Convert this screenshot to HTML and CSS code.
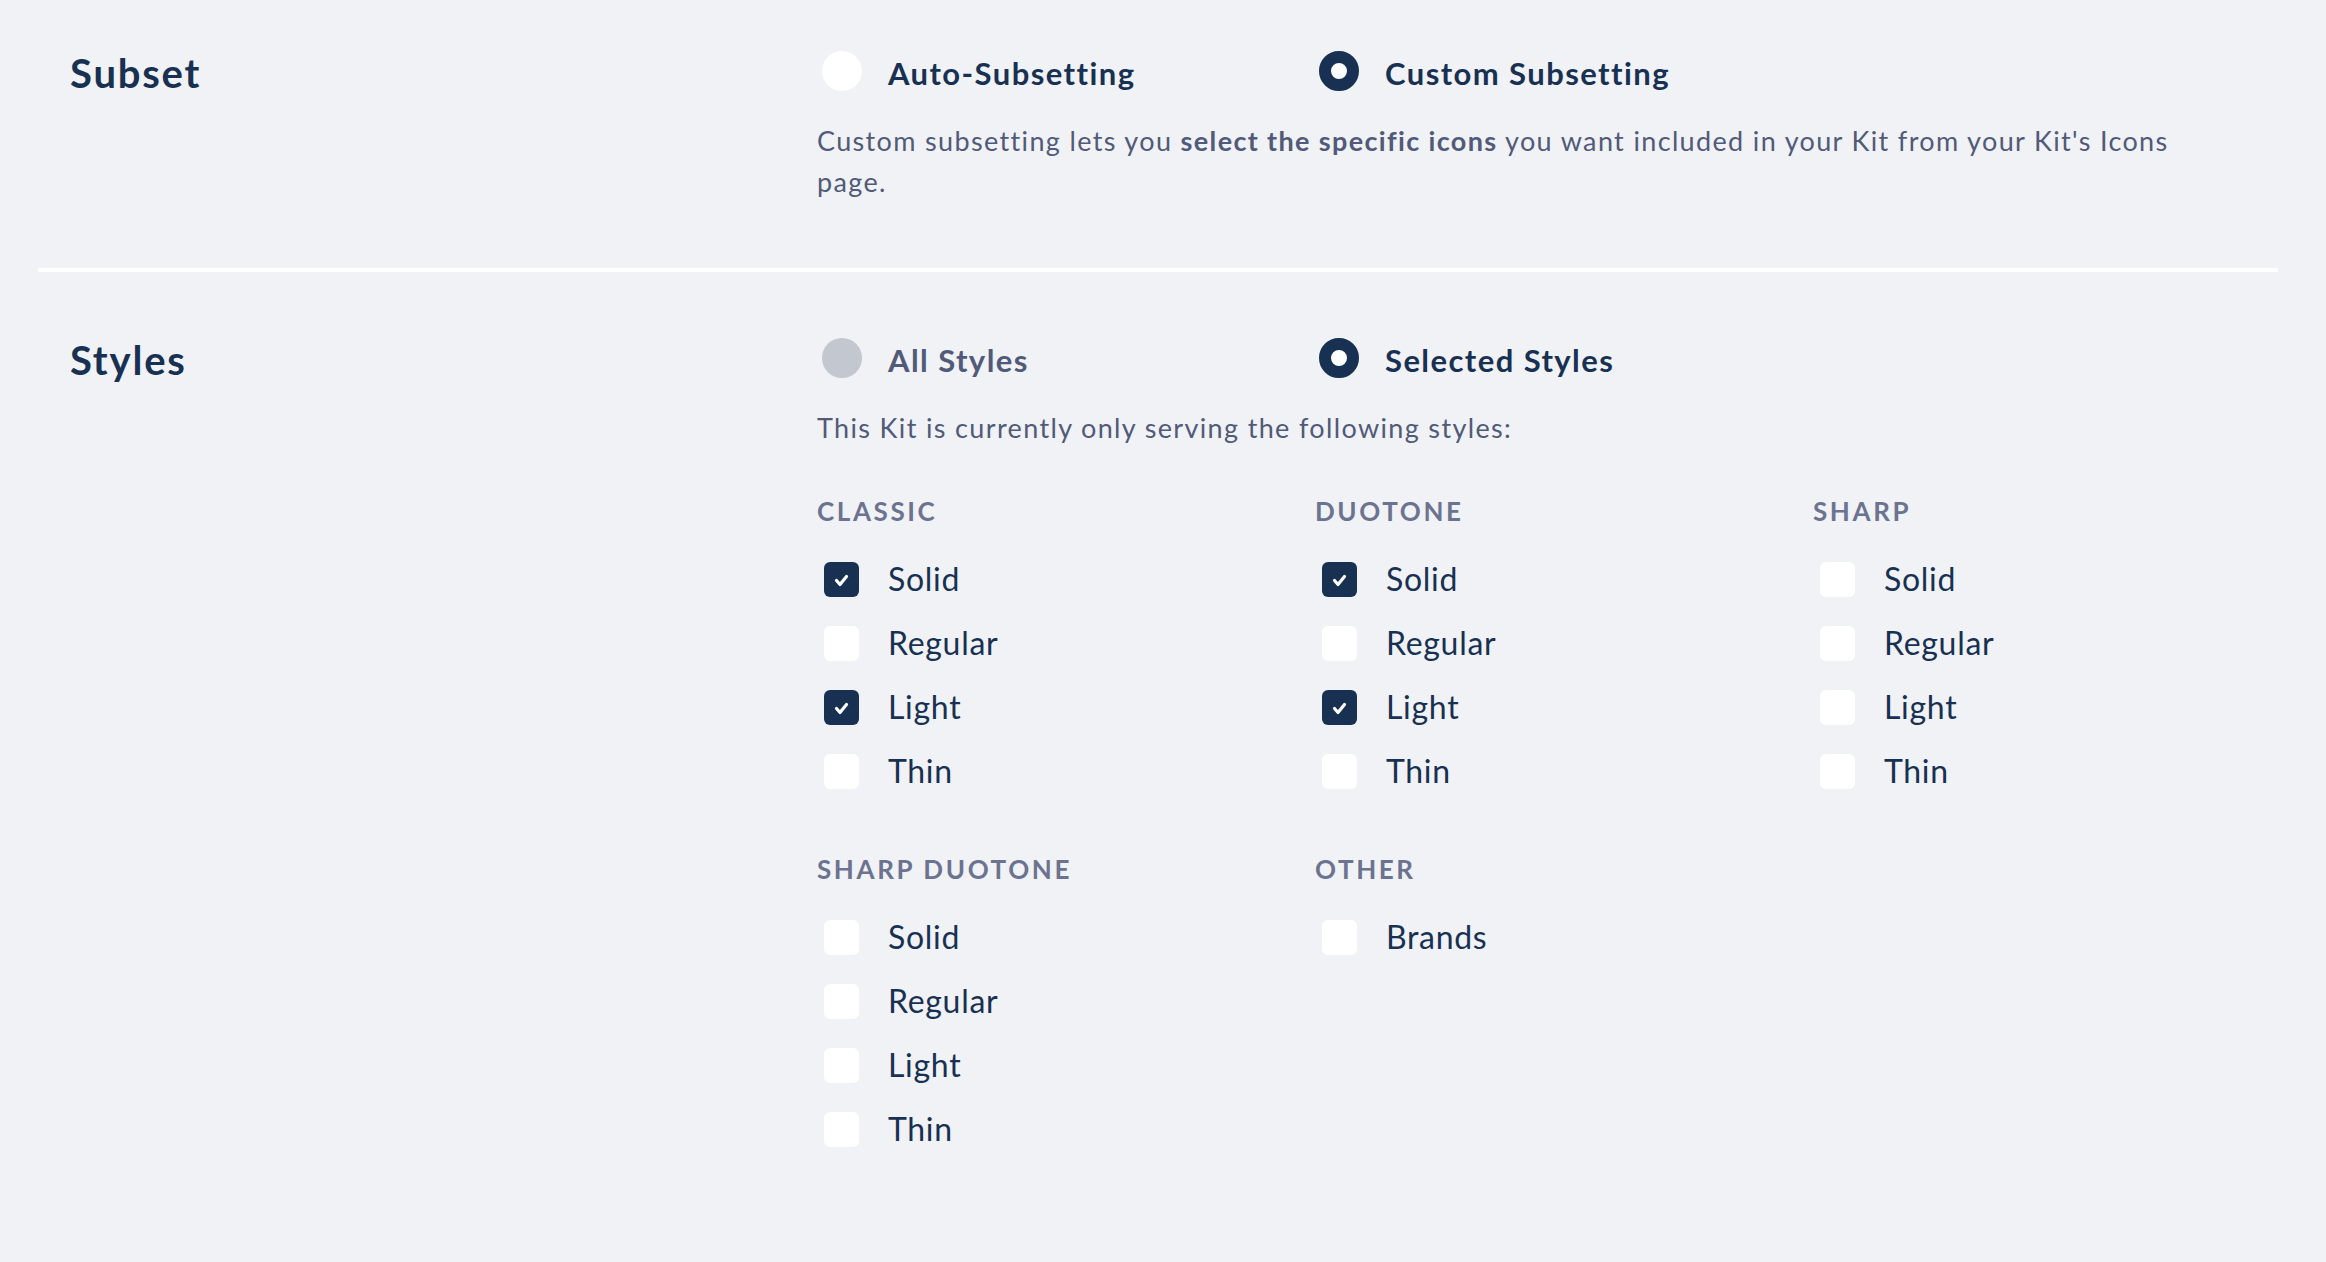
FILE: index.html
```html
<!DOCTYPE html>
<html lang="en">
<head>
<meta charset="utf-8">
<title>Kit Settings</title>
<link rel="stylesheet" href="styles.css">
</head>
<body>
<main class="page">
  <section class="row">
    <h2 class="row-title">Subset</h2>
    <div class="row-body">
      <div class="radios">
        <label class="radio"><span class="radio-dot"></span><span class="radio-text">Auto-Subsetting</span></label>
        <label class="radio is-checked"><span class="radio-dot"></span><span class="radio-text">Custom Subsetting</span></label>
      </div>
      <p class="desc">Custom subsetting lets you <strong>select the specific icons</strong> you want included in your Kit from your Kit's Icons page.</p>
    </div>
  </section>
  <div class="divider"></div>
  <section class="row">
    <h2 class="row-title">Styles</h2>
    <div class="row-body">
      <div class="radios">
        <label class="radio is-disabled"><span class="radio-dot"></span><span class="radio-text">All Styles</span></label>
        <label class="radio is-checked"><span class="radio-dot"></span><span class="radio-text">Selected Styles</span></label>
      </div>
      <p class="desc">This Kit is currently only serving the following styles:</p>
      <div class="groups">
        <div class="group">
          <h3 class="group-title">Classic</h3>
          <ul class="checks">
            <li class="check is-checked"><span class="box"><svg viewBox="0 0 35 35"><polyline points="12.5,18.5 16,22.5 22.5,14.5"/></svg></span><span class="check-text">Solid</span></li>
            <li class="check"><span class="box"></span><span class="check-text">Regular</span></li>
            <li class="check is-checked"><span class="box"><svg viewBox="0 0 35 35"><polyline points="12.5,18.5 16,22.5 22.5,14.5"/></svg></span><span class="check-text">Light</span></li>
            <li class="check"><span class="box"></span><span class="check-text">Thin</span></li>
          </ul>
        </div>
        <div class="group">
          <h3 class="group-title">Duotone</h3>
          <ul class="checks">
            <li class="check is-checked"><span class="box"><svg viewBox="0 0 35 35"><polyline points="12.5,18.5 16,22.5 22.5,14.5"/></svg></span><span class="check-text">Solid</span></li>
            <li class="check"><span class="box"></span><span class="check-text">Regular</span></li>
            <li class="check is-checked"><span class="box"><svg viewBox="0 0 35 35"><polyline points="12.5,18.5 16,22.5 22.5,14.5"/></svg></span><span class="check-text">Light</span></li>
            <li class="check"><span class="box"></span><span class="check-text">Thin</span></li>
          </ul>
        </div>
        <div class="group">
          <h3 class="group-title">Sharp</h3>
          <ul class="checks">
            <li class="check"><span class="box"></span><span class="check-text">Solid</span></li>
            <li class="check"><span class="box"></span><span class="check-text">Regular</span></li>
            <li class="check"><span class="box"></span><span class="check-text">Light</span></li>
            <li class="check"><span class="box"></span><span class="check-text">Thin</span></li>
          </ul>
        </div>
        <div class="group">
          <h3 class="group-title">Sharp Duotone</h3>
          <ul class="checks">
            <li class="check"><span class="box"></span><span class="check-text">Solid</span></li>
            <li class="check"><span class="box"></span><span class="check-text">Regular</span></li>
            <li class="check"><span class="box"></span><span class="check-text">Light</span></li>
            <li class="check"><span class="box"></span><span class="check-text">Thin</span></li>
          </ul>
        </div>
        <div class="group">
          <h3 class="group-title">Other</h3>
          <ul class="checks">
            <li class="check"><span class="box"></span><span class="check-text">Brands</span></li>
          </ul>
        </div>
      </div>
    </div>
  </section>
</main>
</body>
</html>
```

FILE: styles.css
```css
* { box-sizing: border-box; }

html, body {
  margin: 0;
  padding: 0;
  background: #f0f2f5;
}

body {
  font-family: "Lato", "Noto Sans", sans-serif;
  letter-spacing: 0.043em;
  color: #183153;
}

.page {
  padding: 0 48px 0 38px;
}

.row {
  display: flex;
  align-items: flex-start;
  padding: 66px 0 66px 32px;
}

.row:first-child {
  padding-top: 51px;
}

.divider {
  height: 4px;
  background: #ffffff;
}

.row-title {
  width: 747px;
  flex: none;
  margin: 0;
  font-size: 40px;
  line-height: 44px;
  font-weight: 700;
  letter-spacing: 0.045em;
  color: #183153;
}

.row-body {
  flex: 1;
  min-width: 0;
}

.radios {
  display: grid;
  grid-template-columns: 497px 497px;
}

.radio {
  display: flex;
  align-items: flex-start;
}

.radio-dot {
  flex: none;
  width: 40px;
  height: 40px;
  margin-left: 5px;
  border-radius: 50%;
  background: #ffffff;
}

.radio.is-checked .radio-dot {
  background: #ffffff;
  border: 12px solid #183153;
}

.radio.is-disabled .radio-dot {
  background: #c3c7cf;
}

.radio-text {
  margin-left: 26px;
  font-size: 31px;
  line-height: 44px;
  font-weight: 700;
  letter-spacing: 0.046em;
  color: #183153;
}

.radio.is-disabled .radio-text {
  color: #515a79;
}

.desc {
  max-width: 1400px;
  margin: 25px 0 0;
  font-size: 27px;
  line-height: 41px;
  letter-spacing: 0.05em;
  color: #515a79;
}

.desc strong {
  font-weight: 700;
}

.groups {
  margin-top: 44px;
  display: grid;
  grid-template-columns: 498px 498px 498px;
  row-gap: 47px;
}

.group-title {
  margin: 0 0 16px;
  font-size: 26px;
  line-height: 39px;
  font-weight: 700;
  letter-spacing: 2.6px;
  text-transform: uppercase;
  color: #6b7390;
}

.checks {
  list-style: none;
  margin: 0;
  padding: 0;
}

.check {
  display: flex;
  align-items: center;
  height: 64px;
}

.box {
  flex: none;
  width: 35px;
  height: 35px;
  margin-left: 7px;
  border-radius: 6px;
  background: #ffffff;
}

.check.is-checked .box {
  background: #183153;
}

.box svg {
  display: block;
  width: 35px;
  height: 35px;
}

.box polyline {
  fill: none;
  stroke: #ffffff;
  stroke-width: 3.2;
  stroke-linecap: round;
  stroke-linejoin: round;
}

.check-text {
  margin-left: 29px;
  font-size: 32px;
  line-height: 64px;
  color: #183153;
}
```
